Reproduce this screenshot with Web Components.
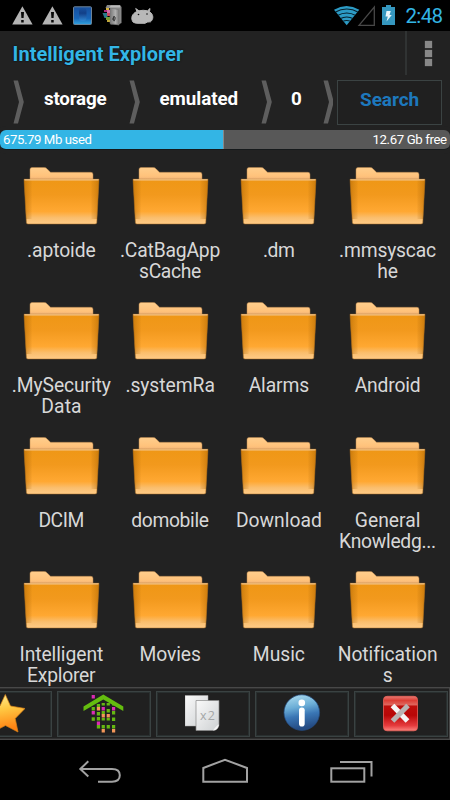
<!DOCTYPE html>
<html lang="en"><head><meta charset="utf-8"><title>Intelligent Explorer</title>
<style>html,body{margin:0;background:#000}body{width:450px;height:800px;overflow:hidden;font-family:Roboto,"Liberation Sans",sans-serif}</style></head>
<body>
<file-explorer></file-explorer>
<script>
const define=(name,html,setup)=>customElements.define(name,class extends HTMLElement{
  constructor(){super();this.attachShadow({mode:'open'});}
  connectedCallback(){
    this.shadowRoot.innerHTML='<style>:host{display:block;box-sizing:border-box}svg{display:block}*{box-sizing:border-box}</style>'+(typeof html==='function'?html(this):html);
    if(setup)setup(this);
  }
});

// One line of text spaced to the ink width given in "w".
define('fit-text',`<style>:host{display:block;white-space:nowrap}span{display:inline-block}</style><span><slot></slot></span>`,el=>{
  const s=el.shadowRoot.querySelector('span'),w=+el.getAttribute('w');
  const c=document.createElement('canvas').getContext('2d'),st=getComputedStyle(el);
  c.font=`${st.fontWeight} ${st.fontSize} ${st.fontFamily}`;
  const t=el.textContent,m=c.measureText(t),ink=m.actualBoundingBoxLeft+m.actualBoundingBoxRight;
  if(w&&t.length>1){const ls=(w-ink)/(t.length-1);s.style.letterSpacing=ls+'px';s.style.marginRight=-ls+'px';}
});

define('status-bar',`<style>:host{height:31px;background:#000;color:#33b5e5;display:flex;padding:0 7px 0 12px;font-size:20.5px;line-height:32px}svg{flex:none}fit-text{margin-left:9px}.gap{flex:1}</style>
<svg width="143" height="31" viewBox="12 0 143 31">
<defs><linearGradient id="b" x2="0" y2="1"><stop stop-color="#174f9e"/><stop offset=".65" stop-color="#1764b7"/><stop offset="1" stop-color="#32a3df"/></linearGradient><linearGradient id="m" x2="1"><stop stop-color="#777"/><stop offset=".6" stop-color="#b0b0b0"/><stop offset="1" stop-color="#777"/></linearGradient><linearGradient id="k" x2="0" y2="1"><stop stop-color="#17509c"/><stop offset=".4" stop-color="#123f88"/><stop offset="1" stop-color="#2f86d2"/></linearGradient></defs>
<g id="w"><path d="M22.4 6.3 12.2 24.6H32.6Z" fill="#b4b4b4"/><path d="M21 12h3l-.4 6h-2.2zM21.2 20h2.5v2.4h-2.5z" fill="#080808"/></g><use href="#w" x="30"/>
<rect x="73.5" y="6.8" width="18" height="17.7" rx="1" fill="url(#b)" stroke="#6d8296"/><rect x="79" y="8" width="7.500" height="13" rx="3" fill="url(#k)"/>
<path d="M107 5h13l1.500 2v16l-3 1.500h-8V8h-5z" fill="#888"/><path d="M110 8l9 1.800V25l-9-1.500z" fill="url(#m)" stroke="#777" stroke-width=".6"/><path d="M111 5.500h9v2h-11z" fill="#bbb"/><path d="M106 8h3v2h-3z" fill="#d6b23c"/><path d="M104 10h3v2h-3z" fill="#a82c79"/><path d="M107 10h3v4h-3z" fill="#cf74a8"/><path d="M102.500 13h5v5h-3z" fill="#287b89"/><path d="M107 13h3v3h-3z" fill="#c84a61"/><path d="M106 17h4v3h-4z" fill="#769d35"/><path d="M107 20h3v2h-3z" fill="#bda63b"/><path d="M113 20c-1-3 3-5 2-1s-2 2-1-3" fill="none" stroke="#333"/>
<path d="M133 22C130.500 18 132 13.500 137 11.500L135.700 8.500 139 10.800Q143 9.700 147.500 10.800L150 8.500 149.500 11.800C154 14.500 153.500 19.500 150.500 21.800Q147 21.500 145 23.300H138Q135 23.500 133 22Z" fill="#b8b8b8" stroke="#b8b8b8" stroke-width="1" stroke-linejoin="round"/><circle cx="138.500" cy="14.500" r=".8" fill="#111"/><circle cx="147" cy="14" r=".8" fill="#111"/></svg>
<span class="gap"></span>
<svg width="62" height="31" viewBox="334 0 62 31"><clipPath id="c"><path d="M334 9.700Q346.500 2.500 359.300 9.700L346.700 25.200Z"/></clipPath><path d="M334 9.700Q346.500 2.500 359.300 9.700L346.700 25.200Z" fill="#2c9bc5"/><g clip-path="url(#c)" fill="none" stroke="#06202c" stroke-width="1.100"><path d="M335 12.300q11.700-6.500 23.500 0M337.500 15.500q9.200-5 18.300 0M340 18.700q6.700-3.500 13.500 0M342.500 21.500q4.200-2 8.500 0"/></g><path d="M359 25.300 374.300 7V25.300Z" fill="none" stroke="#484848" stroke-width="1.300"/><path d="M382 7h4V5h5v2h4v18h-13z" fill="#3597bf"/><path d="M386.500 11h4.300l-1.300 4h2.300l-5.300 6.500 1.300-5h-2.300z" fill="#e9f6fb"/></svg>
<fit-text w="37">2:48</fit-text>`);

define('title-bar',`<style>:host{height:44px;display:flex;justify-content:space-between;padding-left:12.500px;color:#33b5e5;font-weight:700;font-size:20px;line-height:46px;text-shadow:0 0 2px #000}.menu{width:45px;border-left:2px solid #303333;display:flex;flex-direction:column;gap:2px;padding:10px 0 0 18px}i{width:7px;height:7px;background:#888;box-shadow:0 0 1px #777}</style>
<fit-text w="170.500">Intelligent Explorer</fit-text><div class="menu"><i></i><i></i><i></i></div>`);

define('crumb-arrow',`<style>:host{width:12px;height:44px;flex:none}</style><svg width="12" height="44" viewBox="0 0 12 44"><path d="M.5.5H5L10.800 22 5 43.500H.5L6 22Z" fill="#5e5e5e"/></svg>`);

define('path-bar',`<style>:host{height:54px;display:grid;grid-template-columns:13px 12px 104px 12px 119.500px 12px 50.500px 12px 107px;padding-top:5px;font-weight:700;font-size:18.800px;color:#fff;line-height:38px}fit-text{justify-self:start}crumb-arrow{overflow:hidden}.last{width:9.500px}
button{margin:0 0 0 1.500px;width:105px;height:45px;border:1px solid #3b4343;background:#202020;padding:0 0 5px 22.500px;text-align:left;font:700 19px/36px Roboto,sans-serif;color:#1d78bd}</style>
<span></span><crumb-arrow></crumb-arrow><fit-text w="62.500" style="margin-left:19px">storage</fit-text><crumb-arrow></crumb-arrow><fit-text w="78" style="margin-left:18.500px">emulated</fit-text><crumb-arrow></crumb-arrow><fit-text style="margin-left:18.500px">0</fit-text><crumb-arrow class="last"></crumb-arrow><button><fit-text w="58.500">Search</fit-text></button>`);

define('storage-meter',`<style>:host{height:20px;margin-top:1px;display:flex;justify-content:space-between;border-radius:6px;background:linear-gradient(90deg,#33b5e5 223.500px,#888 223.500px,#585858 224.500px);padding:0 3px;font-size:13.200px;line-height:19px;color:#fff;border-bottom:1px solid #15191b;box-shadow:0 0 0 4px #222}</style><fit-text w="88.500">675.79 Mb used</fit-text><fit-text w="73.500">12.67 Gb free</fit-text>`);

define('folder-item',el=>`<style>:host{display:flex;flex-direction:column;align-items:center;font-size:19.300px;line-height:21px;color:#d8d8d8}svg{margin-bottom:14px;flex:none}</style>
<svg width="77" height="59" viewBox="0 0 77 59"><defs><linearGradient id="f" x2="0" y2="1"><stop stop-color="#f2bb76"/><stop offset=".035" stop-color="#ef9716"/><stop offset=".35" stop-color="#f2991d"/><stop offset=".72" stop-color="#ffa832"/><stop offset=".86" stop-color="#fabe6d"/><stop offset="1" stop-color="#ffcb87"/></linearGradient><linearGradient id="e"><stop stop-color="#a65f00" stop-opacity=".5"/><stop offset=".09" stop-color="#b26a0a" stop-opacity=".15"/><stop offset=".11" stop-color="#b26a0a" stop-opacity="0"/><stop offset=".89" stop-color="#b26a0a" stop-opacity="0"/><stop offset=".91" stop-color="#b26a0a" stop-opacity=".15"/><stop offset="1" stop-color="#a65f00" stop-opacity=".5"/></linearGradient><linearGradient id="t" x2="0" y2="1"><stop stop-color="#ffce8c"/><stop offset=".7" stop-color="#ffc27b"/><stop offset="1" stop-color="#ecaf77"/></linearGradient></defs>
<path d="M7 13V2.500Q7 .5 9 .5H21Q23 .5 24 1.700L27.500 5.300H68Q70 5.300 70 7.500V13Z" fill="url(#t)" stroke="#b6844c" stroke-width=".5"/><path d="M1 12.200H76L73.800 55.500Q73.700 57 72 57H5Q3.500 57 3.400 55.500Z" fill="url(#f)" stroke="#a76b20" stroke-width=".5"/><path d="M1 13H76L74 52H3Z" fill="url(#e)"/><path d="M1.500 12.800H75.500" stroke="#f3c07f" stroke-width="1.200"/></svg>
${el.getAttribute('lines').split('|').map(s=>{const [t,w]=s.split(':');return `<fit-text w="${w}">${t}</fit-text>`}).join('')}`);

const folders=['.aptoide:67.5','.CatBagApp:98.5|sCache:62','.dm:30','.mmsyscac:96|he:19.5','.MySecurity:98|Data:39','.systemRa:88','Alarms:59.5','Android:65','DCIM:44','domobile:77.5','Download:84','General:64|Knowledg...:95','Intelligent:82.5|Explorer:68','Movies:59.5','Music:51','Notification:97.5|s:9'];
define('folder-grid',`<style>:host{overflow:hidden;padding:17px 0 0 7px;display:grid;grid-template-columns:repeat(4,108.750px);grid-template-rows:135px 135px 134px 134px}</style>${folders.map(f=>`<folder-item lines="${f}"></folder-item>`).join('')}`);

define('tool-button',`<style>:host{width:94px;height:46px;flex:none;border:1px solid #3a4242;outline:1px solid #292f2f;outline-offset:-2px;display:flex;justify-content:center;padding-top:2px}</style><slot></slot>`);

const dots=[[278,695,'p'],[278,707,'g'],[278,711,'p'],[278,717.300,'g'],[293.500,704,'g'],[293.500,707,'o'],[293.500,712,'g'],[293.500,717,'g'],[293.500,721.500,'p'],[293.500,725,'g'],[308,703,'g'],[308,707,'p'],[308,711,'g'],[308,714,'o'],[308,718,'g'],[308,725,'g'],[308,729,'o'],[323,703,'g'],[323,709,'g'],[323,714,'o'],[323,718,'g'],[323,725,'g'],[339,703,'g'],[339,707,'p'],[339,711,'g'],[339,717.500,'g'],[339,725,'g'],[339,729,'o']].map(([x,y,k])=>`<rect x="${x/3}" y="${y}" width="3.200" height="${y===718||y===703?2.500:3.500}" fill="${{p:'#dc2bb4',g:'#65b812',o:'#f39759'}[k]}"/>`).join('');
define('tool-strip',`<style>:host{height:53px;display:flex;gap:5px;border:1px solid #484848;border-width:1px 1px 1px 0;padding:3px 0 0 0;overflow:hidden;background:#202020;box-shadow:inset 0 1px #303030,inset 0 -1px #303030}tool-button:first-of-type{margin-left:-42px}</style>
<tool-button><svg width="40" height="40" viewBox="-15 694 40 40"><defs><linearGradient id="s" x2=".2" y2="1"><stop stop-color="#fff2a0"/><stop offset=".45" stop-color="#ffc943"/><stop offset="1" stop-color="#ff8212"/></linearGradient></defs><path d="M5.300 694.500 10.500 706 25 708.500 15.200 718.500 18 732 5.500 725.500-7 732-4 718-15 708 0 706Z" fill="url(#s)" stroke="#d98217" stroke-width=".7" stroke-linejoin="round"/></svg></tool-button>
<tool-button><svg width="42" height="40" viewBox="84 694 42 40">${dots}<path d="M84.500 706.500 104.300 694.500 124.300 706.500V711L104.300 699.500 84.500 711Z" fill="#64bd0f"/></svg></tool-button>
<tool-button><svg width="36" height="40" viewBox="186 694 36 40"><defs><linearGradient id="a" x2="1" y2="1"><stop stop-color="#fafafa"/><stop offset="1" stop-color="#cdd0d2"/></linearGradient></defs><path d="M186 695.500H209V726H186Z" fill="url(#a)" stroke="#aaa" stroke-width=".5"/><path d="M197 700.500H220V725Q219 730 214.500 730.500H197Z" fill="url(#a)" stroke="#888" stroke-width=".7"/><path d="M214 730.500Q218 725 220 724.500 219 730 214 730.500" fill="#f5f5f5"/><text x="201" y="720" font-family="Open Sans" font-size="12.500" textLength="15" fill="#a4a6a7">x2</text></svg></tool-button>
<tool-button><svg width="38" height="38" viewBox="283 694 38 38"><defs><linearGradient id="i" x2=".2" y2="1"><stop stop-color="#b3e1f2"/><stop offset=".4" stop-color="#6badd6"/><stop offset=".65" stop-color="#3a76b5"/><stop offset="1" stop-color="#244b83"/></linearGradient></defs><circle cx="301.800" cy="712.600" r="17.800" fill="url(#i)" stroke="#244b7e" stroke-width=".7"/><circle cx="301.800" cy="702.900" r="3.300" fill="#fff"/><rect x="299" y="707.500" width="5.700" height="19" rx="2.800" fill="#fff"/></svg></tool-button>
<tool-button><svg width="36" height="38" viewBox="383 694 36 38"><defs><linearGradient id="r" x2="0" y2="1"><stop stop-color="#e57972"/><stop offset=".12" stop-color="#dc3e35"/><stop offset=".25" stop-color="#df685f"/><stop offset=".28" stop-color="#bd0e0b"/><stop offset=".55" stop-color="#b80707"/><stop offset=".85" stop-color="#e63c3e"/><stop offset="1" stop-color="#fb8580"/></linearGradient></defs><rect x="383.500" y="696.300" width="34" height="34.500" rx="3.500" fill="url(#r)" stroke="#ea6259" stroke-width=".8"/><path d="M392.500 705.500 407.500 721" stroke="#f5f5f5" stroke-width="5.200"/><path d="M408 705.500 392.500 721" stroke="#b9b4b4" stroke-width="5.200"/></svg></tool-button>`);

define('nav-bar',`<style>:host{height:60px;background:#000;display:flex;padding:18px 0 0 78px;gap:79px}svg{flex:none}path,rect{fill:none;stroke:#a2a2a2;stroke-width:2}</style>
<svg width="44" height="28" viewBox="78 758 44 28"><path d="M88.300 761.300 80.300 769 88.300 776.500M80.500 769H112Q119.800 769 119.800 775.300 119.800 781.700 112 781.700H98"/></svg>
<svg width="48" height="28" viewBox="201 758 48 28"><path d="M203.300 781.700V768L225 759.700 247 768V781.700Z"/></svg>
<svg width="46" height="28" viewBox="328 758 46 28"><rect x="331.300" y="768.300" width="33" height="13.400"/><path d="M340 762H371.500V776.500"/></svg>`);

define('file-explorer',`<style>:host{width:450px;height:800px;background:#222;display:flex;flex-direction:column;overflow:hidden}status-bar,title-bar,path-bar,storage-meter,folder-grid,tool-strip,nav-bar{flex:none}folder-grid{height:537px}storage-meter{z-index:1}</style><status-bar></status-bar><title-bar></title-bar><path-bar></path-bar><storage-meter></storage-meter><folder-grid></folder-grid><tool-strip></tool-strip><nav-bar></nav-bar>`);
</script>
</body></html>
